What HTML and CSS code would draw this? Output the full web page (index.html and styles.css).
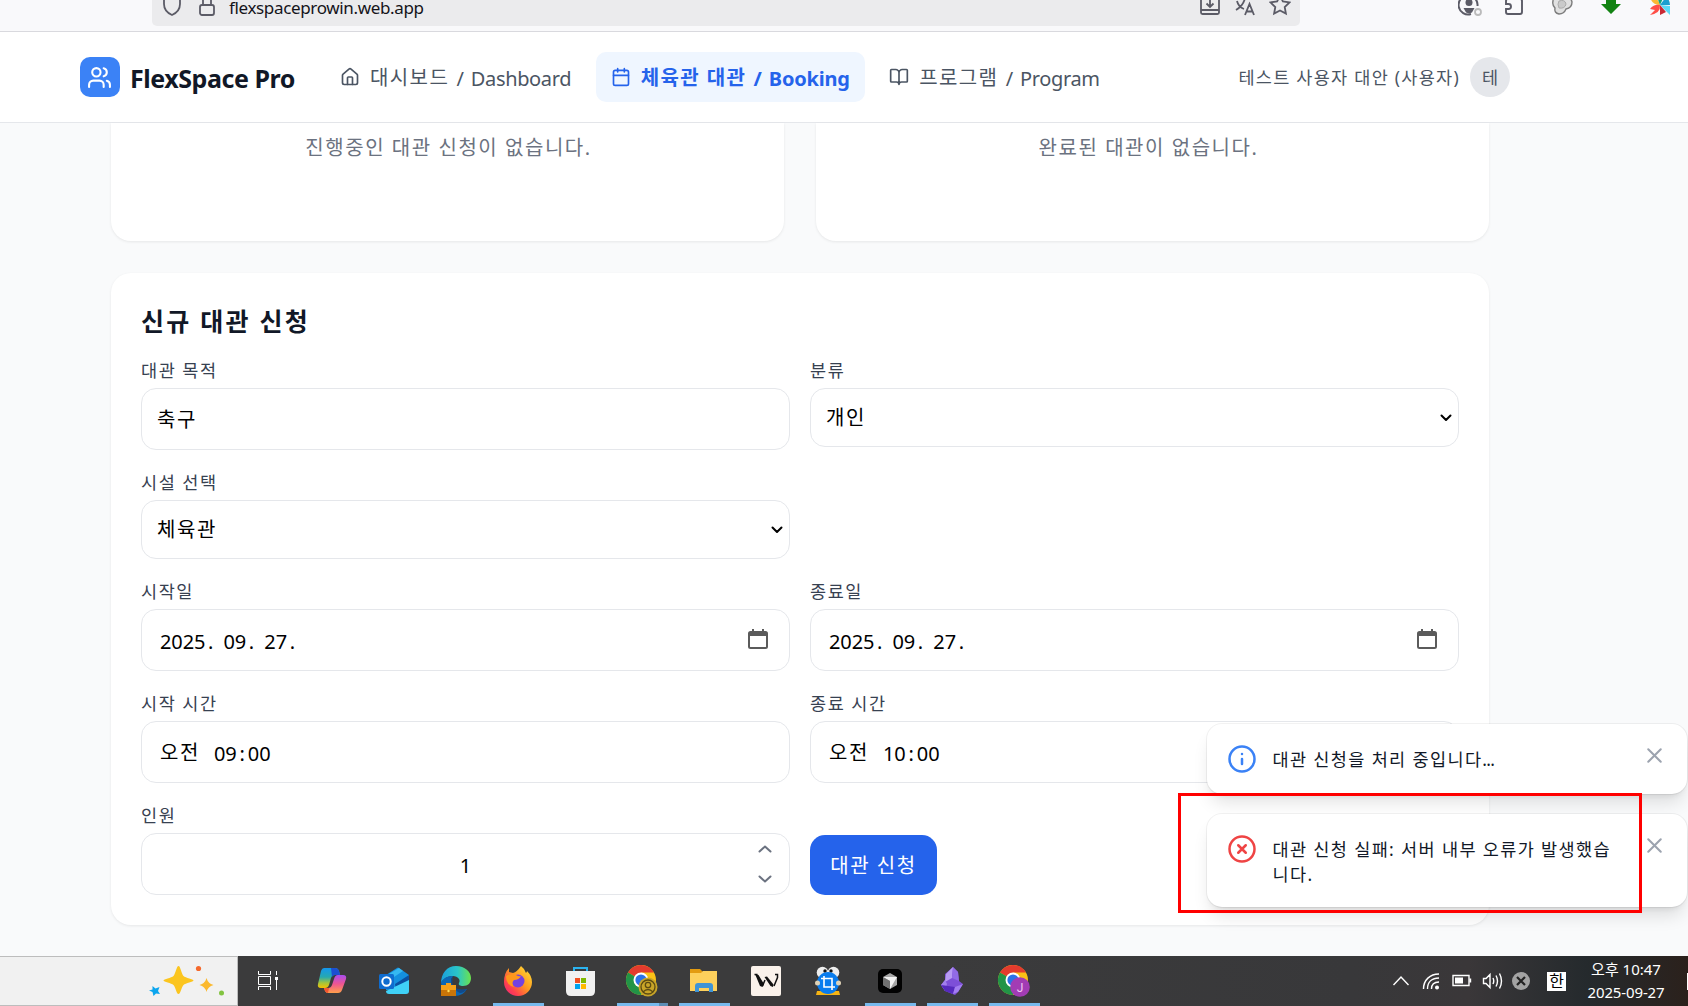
FILE: index.html
```html
<!DOCTYPE html>
<html lang="ko">
<head>
<meta charset="utf-8">
<title>FlexSpace Pro</title>
<link rel="stylesheet" href="styles.css">
</head>
<body>
<div class="browser-bar">
  <div class="url-bar">
    <svg class="shield" width="20" height="22" viewBox="0 0 20 22"><path d="M10 1 18 4v6c0 5-3.500 9-8 11C5.500 19 2 15 2 10V4z"/></svg>
    <svg class="lock" width="18" height="22" viewBox="0 0 18 22"><rect x="2" y="11" width="14" height="10" rx="2"/><path d="M5 11V6a4 4 0 0 1 8 0v5"/></svg>
    <span class="url">flexspaceprowin.web.app</span>
    <svg class="save" width="22" height="22" viewBox="0 0 22 22"><path d="M6 2H3.500Q2 2 2 3.500V18.500Q2 20 3.500 20h15Q20 20 20 18.500V3.500Q20 2 18.500 2H16M2 16h18M11 1v12M7.500 9.500 11 13l3.500-3.500"/></svg>
    <svg class="translate" width="22" height="22" viewBox="0 0 22 22"><path d="M1 4h12M7 1v3M2 16C7 13 10 9 11 4M3 7c1 4 4 7 7 8M11 21l4.500-11L20 21M12.500 17.500h6"/></svg>
    <svg class="star" width="22" height="22" viewBox="0 0 22 22"><path d="m11 1.500 2.900 6 6.600.9-4.800 4.600 1.200 6.600L11 16.400l-5.900 3.200 1.200-6.600L1.500 8.400l6.600-.9z"/></svg>
  </div>
  <div class="extensions">
    <svg width="24" height="22" viewBox="0 0 24 22"><path d="M13 20A9.500 9.500 0 1 1 19.500 12" fill="none" stroke="#5b5b66" stroke-width="2"/><circle cx="11" cy="8.500" r="3.500" fill="#5b5b66"/><path d="M5.500 14h11l-2.500 4.500q-3 1.500-6 0z" fill="#5b5b66"/><circle cx="20" cy="18" r="3" fill="none" stroke="#bbb" stroke-width="1.800"/></svg>
    <svg class="puzzle" width="22" height="22" viewBox="0 0 22 22"><path d="M3 10V7q0-2 2-2h4V3.500a2 2 0 0 1 4 0V5h4q2 0 2 2v11q0 2-2 2H5q-2 0-2-2v-3h2.500a2.500 2.500 0 0 0 0-5z" fill="none" stroke="#5b5b66" stroke-width="1.900"/></svg>
    <svg class="blobs" width="22" height="22" viewBox="0 0 22 22" fill="#d0d0d0" fill-opacity=".6"><path d="M8 1q4-1 6 2 6 0 7 5 0 6-6 7-2 5-7 5-5-1-4-6-3-3-2-7 0-5 6-6z" stroke="#7c7c7c" stroke-width="1.400"/><path d="M8 7q6-2 7 3-1 5-7 4-2-4 0-7z" fill="#bbb" stroke="#aaa"/></svg>
    <svg class="down" width="22" height="22" viewBox="0 0 22 22"><path d="M6 0h10v10h5L11 20 1 10h5z" fill="#138313"/></svg>
    <svg class="pinwheel" width="22" height="22" viewBox="0 0 22 22"><path d="M1 3q9 1 10 8-8 0-10-8z" fill="#fbb934"/><path d="M7 0h9l-5 11z" fill="#12a37d"/><path d="m11 11 6-8q4 3 4 8z" fill="#1b9fd0"/><path d="m11 11 10 1v9z" fill="#5cd8f5"/><path d="m11 11 6 7-6 3z" fill="#c92a35"/><path d="M11 11q1 8-10 10l5-5-5-1q4-5 10-4z" fill="#ff4f48"/></svg>
  </div>
</div>

<header class="site-header">
  <div class="brand">
    <span class="brand-mark"><svg class="line" width="25" height="25" viewBox="0 0 24 24"><path d="M16 21v-2a4 4 0 0 0-4-4H6a4 4 0 0 0-4 4v2"/><circle cx="9" cy="7" r="4"/><path d="M22 21v-2a4 4 0 0 0-3-3.870M16 3.130a4 4 0 0 1 0 7.750"/></svg></span>
    <span class="brand-name">FlexSpace Pro</span>
  </div>
  <nav class="nav">
    <a class="nav-item"><svg class="line" width="20" height="20" viewBox="0 0 24 24"><path d="M15 21v-8a1 1 0 0 0-1-1h-4a1 1 0 0 0-1 1v8"/><path d="M3 10a2 2 0 0 1 .709-1.528l7-5.999a2 2 0 0 1 2.582 0l7 5.999A2 2 0 0 1 21 10v9a2 2 0 0 1-2 2H5a2 2 0 0 1-2-2z"/></svg><span class="nav-text">대시보드<span class="latin"> / Dashboard</span></span></a>
    <a class="nav-item active"><svg class="line" width="20" height="20" viewBox="0 0 24 24"><path d="M8 2v4M16 2v4M3 10h18"/><rect x="3" y="4" width="18" height="18" rx="2"/></svg><span class="nav-text">체육관 대관<span class="latin"> / Booking</span></span></a>
    <a class="nav-item"><svg class="line" width="20" height="20" viewBox="0 0 24 24"><path d="M12 7v14M3 18a1 1 0 0 1-1-1V4a1 1 0 0 1 1-1h5a4 4 0 0 1 4 4 4 4 0 0 1 4-4h5a1 1 0 0 1 1 1v13a1 1 0 0 1-1 1h-6a3 3 0 0 0-3 3 3 3 0 0 0-3-3z"/></svg><span class="nav-text">프로그램<span class="latin"> / Program</span></span></a>
  </nav>
  <div class="user"><span class="user-name">테스트 사용자 대안 (사용자)</span><span class="avatar">테</span></div>
</header>

<main class="main">
  <div class="status-row">
    <section class="status-card">진행중인 대관 신청이 없습니다.</section>
    <section class="status-card done">완료된 대관이 없습니다.</section>
  </div>
  <section class="form-card">
    <h2>신규 대관 신청</h2>
    <form class="form-grid">
      <div class="field"><label>대관 목적</label><div class="control">축구</div></div>
      <div class="field"><label>분류</label><div class="control select">개인<svg class="line caret" width="12" height="8" viewBox="0 0 12 8"><path d="m1.500 1.500 4.500 4.500 4.500-4.500"/></svg></div></div>
      <div class="field first-col"><label>시설 선택</label><div class="control select">체육관<svg class="line caret" width="12" height="8" viewBox="0 0 12 8"><path d="m1.500 1.500 4.500 4.500 4.500-4.500"/></svg></div></div>
      <div class="field"><label>시작일</label><div class="control picker"><span class="digits">2025<i>.</i> 09<i>.</i> 27<i>.</i></span><svg class="cal" width="22" height="22" viewBox="0 0 22 22"><path d="M5 1h2v2h8V1h2v2h1.500A2.500 2.500 0 0 1 21 5.500v13a2.500 2.500 0 0 1-2.500 2.500h-15A2.500 2.500 0 0 1 1 18.500v-13A2.500 2.500 0 0 1 3.500 3H5zM3 8v10.500q0 .5.500.500h15q.5 0 .500-.500V8z" fill-rule="evenodd"/></svg></div></div>
      <div class="field"><label>종료일</label><div class="control picker"><span class="digits">2025<i>.</i> 09<i>.</i> 27<i>.</i></span><svg class="cal" width="22" height="22" viewBox="0 0 22 22"><path d="M5 1h2v2h8V1h2v2h1.500A2.500 2.500 0 0 1 21 5.500v13a2.500 2.500 0 0 1-2.500 2.500h-15A2.500 2.500 0 0 1 1 18.500v-13A2.500 2.500 0 0 1 3.500 3H5zM3 8v10.500q0 .5.500.500h15q.5 0 .500-.500V8z" fill-rule="evenodd"/></svg></div></div>
      <div class="field"><label>시작 시간</label><div class="control picker"><span>오전</span><span class="digits">09<b>:</b>00</span></div></div>
      <div class="field"><label>종료 시간</label><div class="control picker"><span>오전</span><span class="digits">10<b>:</b>00</span></div></div>
      <div class="field"><label>인원</label><div class="control number"><span class="digits">1</span><span class="stepper"><svg class="line" width="14" height="8" viewBox="0 0 14 8"><path d="m1.500 6.500 5.500-5 5.500 5"/></svg><svg class="line" width="14" height="8" viewBox="0 0 14 8"><path d="m1.500 1.500 5.500 5 5.500-5"/></svg></span></div></div>
      <div class="submit"><button type="button">대관 신청</button></div>
    </form>
  </section>
</main>

<footer class="taskbar">
  <div class="search"><svg width="78" height="32" viewBox="0 0 78 32"><path d="M30.500 1c2 0 3 8 5 10s10 3 10 4.500-8 2.500-10 4.500-3 9-5 9-3-7-5-9-10-3-10-4.500 8-2.500 10-4.500 3-10 5-10z" fill="#fbc51f"/><path d="M58.500 13q1.500 5.500 7 7-5.500 1.500-7 7-1.500-5.500-7-7 5.500-1.500 7-7z" fill="#fbb92e"/><path d="m4.500 21 3 2.500 4-1.500-1.500 4 2 3-4-.500-2.500 2.500-1-4-3.500-1.500 3.500-1z" fill="#0ba5ee"/><circle cx="50.500" cy="3.500" r="2.600" fill="#f5692c"/><circle cx="73.500" cy="28" r="2.500" fill="#82c341"/></svg></div>
  <div class="apps">
    <span class="app narrow"><svg width="22" height="22" viewBox="0 0 22 22" fill="none" stroke="#fff"><path d="M1.500 1v3.500h12V1M1.500 20v-3.500h12V20M1.500 6.500h12v8h-12zM19.500 1v4M19.500 10v10"/><path d="M18 7h3v3h-3z" fill="#fff" stroke="none"/></svg></span>
    <span class="app"><svg width="32" height="32" viewBox="0 0 32 32"><defs><linearGradient id="cp1" x2="0" y2="1"><stop stop-color="#1496ee"/><stop offset=".45" stop-color="#26a9b0"/><stop offset=".75" stop-color="#a6c53a"/><stop offset="1" stop-color="#f5c000"/></linearGradient><linearGradient id="cp2" x2="0" y2="1"><stop stop-color="#a94cf0"/><stop offset=".5" stop-color="#ee5591"/><stop offset="1" stop-color="#ffa04a"/></linearGradient></defs><path d="M8 3h11q3 0 4 3l1 4h-5q-3 0-4 3l-2 7q-1 3-4 3H5q-4 0-3-4L5 6q1-3 3-3z" fill="url(#cp1)"/><path d="M15 3h4q3 0 4 3l1 4h-5q-2 0-3 2z" fill="#1c4fd1"/><path d="M22 10h5q4 0 3 4l-4 11q-1 3-4 3H12q-3 0-4-5h4q3 0 4-3l2-6q1-4 4-4z" fill="url(#cp2)"/><path d="M8 23h5l-1 5q-3 0-4-5z" fill="#f3562f"/></svg></span>
    <span class="app"><svg width="32" height="32" viewBox="0 0 32 32"><path d="M8 10 19 3q1-1 2 0l10 7v5L15 25H8z" fill="#1490df"/><path d="m17 19 14-9v6l-13 8z" fill="#0a4fa0"/><path d="m11 9 10-6 4 3-12 8z" fill="#35b8f1"/><path d="M8 26l23-11v11q0 3-3 3H11q-3 0-3-3z" fill="#3fd1f7"/><rect x="1" y="9" width="15" height="15" rx="1.500" fill="#0f6ccf"/><circle cx="8.500" cy="16.500" r="4.200" fill="none" stroke="#fff" stroke-width="2"/></svg></span>
    <span class="app"><svg width="32" height="32" viewBox="0 0 32 32"><defs><linearGradient id="edge"><stop stop-color="#1aa0dd"/><stop offset=".55" stop-color="#2ac5c8"/><stop offset="1" stop-color="#6be24d"/></linearGradient></defs><path d="M1 19C1 8 7 1 16 1s15 6 15 12c0 5-3 8-8 8-3 0-5-1-4-3 2-3-1-7-6-7-7 0-11 4-12 8z" fill="url(#edge)"/><path d="M1 17q5-7 12-6-4 5 0 10 5 6 14 3-4 7-12 7Q2 30 1 17z" fill="#0c67b5"/><path d="M13 11q-4 5 0 10 5 5 14 3-3 4-7 4-10-5-7-17z" fill="#114a8b"/><rect x="1" y="20" width="15" height="11" fill="#c97509"/><path d="M1 20h15v5H1zM6 20v-2h5v2" fill="#f6a019"/><circle cx="8.500" cy="26" r="1.200" fill="#ffe05b"/></svg></span>
    <span class="app open"><svg width="32" height="32" viewBox="0 0 32 32"><defs><linearGradient id="ff" x1="1" x2="0" y2="1"><stop stop-color="#ffe83b"/><stop offset=".45" stop-color="#ff9a1f"/><stop offset=".75" stop-color="#ff3f50"/><stop offset="1" stop-color="#e52183"/></linearGradient></defs><path d="M19 1q4 3 5 7 1-1 1-2 5 5 5 11a14 14 0 0 1-28 0Q2 8 7 3v4l4 1q4-1 8-7z" fill="url(#ff)"/><circle cx="16" cy="16" r="6.500" fill="#7542e0"/><path d="M4 11q6-3 10-1 3 2 5 1-2 4-7 4-3 3 0 7-8-2-8-11z" fill="#ff981c"/></svg></span>
    <span class="app"><svg width="32" height="32" viewBox="0 0 32 32"><path d="M10 8V3h13v5" fill="none" stroke="#2bb3ef" stroke-width="2"/><path d="M2 6h29v20q0 5-5 5H7q-5 0-5-5z" fill="#f1f1f1"/><path d="M11 13h5v5h-5z" fill="#f25022"/><path d="M17 13h5v5h-5z" fill="#7fba00"/><path d="M11 19h5v5h-5z" fill="#00a4ef"/><path d="M17 19h5v5h-5z" fill="#ffb900"/></svg></span>
    <span class="app open stacked"><svg width="34" height="34" viewBox="0 0 34 34"><circle cx="16" cy="16" r="15" fill="#fbc116"/><path d="M16 16 3 8.500A15 15 0 0 1 29 8.500H16z" fill="#e33b2e"/><path d="M3 8.500A15 15 0 0 0 16 31l6.500-11.500L16 16z" fill="#229447"/><circle cx="16" cy="16" r="7.500" fill="#fff"/><circle cx="16" cy="16" r="5.600" fill="#2c72e8"/><circle cx="23" cy="23" r="9.500" fill="#c9a528"/><circle cx="23" cy="23" r="7" fill="none" stroke="#5d4b13" stroke-width="1.300"/><circle cx="23" cy="21" r="2.700" fill="none" stroke="#5d4b13" stroke-width="1.300"/><path d="M18 28q5-5 10 0" fill="none" stroke="#5d4b13" stroke-width="1.300"/></svg></span>
    <span class="app open"><svg width="32" height="32" viewBox="0 0 32 32"><path d="M2 4h10l3 3v6H2z" fill="#e39b10"/><path d="M2 8h11l2-2h14v20H2z" fill="#fdd05c"/><path d="M7 27v-6q0-3 3-3h12q3 0 3 3v6h-4v-4H11v4z" fill="#3f94d6"/></svg></span>
    <span class="app"><svg width="32" height="32" viewBox="0 0 32 32"><rect x="1" y="1" width="30" height="30" rx="2" fill="#faf2eb"/><path d="M4.500 9.500h3M25 9.500h2.500v3L24 21M12.500 21l2.500-6" fill="none" stroke="#111" stroke-width="1.500"/><path d="m5 9 3.500 1 5.500 9-1.500 3-2.500-1zM14.500 12l2.500-.500 6.500 8-.500 2.500-2.500-1z" fill="#111"/></svg></span>
    <span class="app"><svg width="32" height="32" viewBox="0 0 32 32"><path d="M5 26h22l1 4H4z" fill="#f6b414"/><circle cx="10.500" cy="7.500" r="5.800" fill="#eee"/><circle cx="21.500" cy="7.500" r="5.800" fill="#eee"/><circle cx="13" cy="6" r="1.700" fill="#111"/><circle cx="19" cy="6" r="1.700" fill="#111"/><circle cx="16" cy="18" r="11" fill="#087cee"/><circle cx="5.500" cy="18" r="2.500" fill="#ded1b6"/><circle cx="26.500" cy="18" r="2.500" fill="#ded1b6"/><path d="M12 11v11h11M9 13.500h11V25" fill="none" stroke="#fff" stroke-width="1.600"/></svg></span>
    <span class="app open"><svg width="32" height="32" viewBox="0 0 32 32"><rect x="4" y="4" width="24" height="24" rx="5" fill="#020202"/><path d="m16 8 7 4v8l-7 4-7-4v-8z" fill="#a5a5a5"/><path d="M9 12h14l-7 12v-8z" fill="#f1f1f1"/><path d="m9 12 7 4v8l-7-4z" fill="#707070"/></svg></span>
    <span class="app open"><svg width="32" height="32" viewBox="0 0 32 32"><path d="m17 2 5 5 1 9 4 3-5 8-3 3-10-4-4-6 4-5V9z" fill="#7d4fd8"/><path d="m17 2-7 7-1 8 7-4z" fill="#b79bf2"/><path d="m17 2 5 5 1 9-7-3z" fill="#916be5"/><path d="m9 15 2 4-2 7-4-6z" fill="#a17fed"/><path d="m5 20 14 2-2 7-8-3z" fill="#562abd"/><path d="m19 22 8-3-5 8-5 2z" fill="#a27df0"/></svg></span>
    <span class="app open"><svg width="34" height="34" viewBox="0 0 34 34"><circle cx="16" cy="16" r="15" fill="#fbc116"/><path d="M16 16 3 8.500A15 15 0 0 1 29 8.500H16z" fill="#e33b2e"/><path d="M3 8.500A15 15 0 0 0 16 31l6.500-11.500L16 16z" fill="#229447"/><circle cx="16" cy="16" r="7.500" fill="#fff"/><circle cx="16" cy="16" r="5.600" fill="#2c72e8"/><circle cx="23" cy="23" r="9.800" fill="#a23cb4"/><text x="23" y="27.500" text-anchor="middle" font-size="12" font-family="Roboto, sans-serif" fill="#f1c9f5">J</text></svg></span>
  </div>
  <div class="tray">
    <svg width="18" height="12" viewBox="0 0 18 12"><path d="m1.500 10 7.500-8 7.500 8"/></svg>
    <svg width="18" height="18" viewBox="0 0 18 18"><path d="M1.500 17C1.500 8 8 2 17 2M5.500 17C5.500 10 10 6 17 6M9.500 17q0-7 7.500-7"/><circle cx="15" cy="15.500" r="1.300" fill="#fff"/></svg>
    <svg class="battery" width="20" height="14" viewBox="0 0 20 14"><path d="M1 1.500h16v10H1zM18.500 4.500v4"/><path d="M3 3.500h8v6H3z" fill="#fff" stroke="none"/></svg>
    <svg class="speaker" width="22" height="20" viewBox="0 0 22 20"><path d="M1.500 7.500H4l4-4v13l-4-4H1.500zM11 7q1.500 3 0 6M14 4.500q3 5.500 0 11M17.500 2.500q4 7.500 0 15"/></svg>
    <svg width="20" height="20" viewBox="0 0 20 20"><circle cx="10" cy="10" r="9" fill="#a3a3a3" stroke="none"/><path d="m6 6 8 8M14 6l-8 8" stroke="#222" stroke-width="2.200"/></svg>
    <span class="ime">한</span>
    <div class="clock"><span>오후 10:47</span><span class="clock-date">2025-09-27</span></div>
    <span class="notch"></span>
  </div>
</footer>

<div class="toasts">
  <div class="toast info"><svg class="line" width="30" height="30" viewBox="0 0 24 24"><circle cx="12" cy="12" r="10"/><path d="M12 16v-4M12 8h.010"/></svg><p>대관 신청을 처리 중입니다<span class="dots">...</span></p><svg class="line close" width="25" height="25" viewBox="0 0 24 24"><path d="M18 6 6 18M6 6l12 12"/></svg></div>
  <div class="toast error"><svg class="line" width="30" height="30" viewBox="0 0 24 24"><circle cx="12" cy="12" r="10"/><path d="m15 9-6 6M9 9l6 6"/></svg><p>대관 신청 실패: 서버 내부 오류가 발생했습니다.</p><svg class="line close" width="25" height="25" viewBox="0 0 24 24"><path d="M18 6 6 18M6 6l12 12"/></svg></div>
</div>
<div class="highlight"></div>
</body>
</html>
```
FILE: styles.css
```css
* { box-sizing: border-box; }

body {
  margin: 0;
  width: 1688px;
  height: 1006px;
  overflow: hidden;
  position: relative;
  display: flex;
  flex-direction: column;
  background: #f9fafb;
  color: #111827;
  font-family: "Noto Sans", "Noto Sans CJK KR", sans-serif;
  font-size: 20px;
  line-height: 25px;
}

svg { flex: none; display: block; }

.line {
  fill: none;
  stroke: currentColor;
  stroke-width: 2;
  stroke-linecap: round;
  stroke-linejoin: round;
}

/* Browser chrome */
.browser-bar {
  flex: none;
  display: flex;
  align-items: flex-end;
  height: 32px;
  overflow: hidden;
  padding: 0 17px 5px 152px;
  background: #f9f9fb;
  border-bottom: 1px solid #d9d9de;
}

.url-bar {
  flex: none;
  display: flex;
  align-items: center;
  width: 1148px;
  height: 42px;
  padding: 0 9px 0 10px;
  border-radius: 5px;
  background: #ebebed;
  color: #15141a;
}

.url-bar svg { fill: none; stroke: #5b5b66; stroke-width: 1.8; }
.lock { margin: 0 13px 0 16px; }
.url { margin-top: 6px; font-size: 17px; line-height: 20px; letter-spacing: -.35px; white-space: nowrap; }
.url-bar .save { margin-left: auto; }
.url-bar .translate { margin: 0 13px; }

.extensions { display: flex; padding: 0 0 10px 158px; }
.puzzle { margin-left: 21px; }
.blobs { margin-left: 26px; }
.down { margin-left: 27px; }
.pinwheel { margin-left: 27px; }

/* Site header */
.site-header {
  flex: none;
  display: flex;
  align-items: center;
  height: 91px;
  padding: 0 178px 0 80px;
  background: #fff;
  border-bottom: 1px solid #e5e7eb;
  white-space: nowrap;
}

.brand { display: flex; align-items: center; gap: 10px; margin-right: 30px; }

.brand-mark {
  display: grid;
  place-items: center;
  width: 40px;
  height: 40px;
  padding-right: 1px;
  border-radius: 10px;
  background: #3b82f6;
  color: #fff;
}

.brand-name { font-size: 25px; font-weight: 700; padding-top: 3px; letter-spacing: -.444px; }

.nav { display: flex; gap: 9.5px; }

.nav-item {
  display: flex;
  align-items: center;
  gap: 10px;
  height: 50px;
  padding: 2px 15px 0;
  border-radius: 10px;
  color: #4b5563;
}

.nav-item svg { margin-top: -2px; }
.nav-text { letter-spacing: .07em; }
.latin { letter-spacing: -.35px; word-spacing: 2.4px; vertical-align: -1px; }
.nav-item.active { background: #eff6ff; color: #2563eb; font-weight: 700; }
.active .latin { letter-spacing: -.2px; word-spacing: 2.2px; }

.user {
  display: flex;
  align-items: center;
  gap: 10px;
  margin-left: auto;
  color: #4b5563;
  font-size: 17.5px;
}

.user-name { letter-spacing: 1.27px; }

.avatar {
  display: grid;
  place-items: center;
  width: 40px;
  height: 40px;
  border-radius: 50%;
  background: #e5e7eb;
}

/* Content */
.main {
  flex: 1;
  padding: 0 199px 0 111px;
  letter-spacing: .077em;
}

.status-row { display: grid; grid-template-columns: 1fr 1fr; gap: 32px; }

.status-card {
  height: 118px;
  padding: 12px 0 0 2px;
  border-radius: 0 0 20px 20px;
  background: #fff;
  box-shadow: 0 1px 3px rgba(0, 0, 0, .08);
  color: #6b7280;
  text-align: center;
}

.status-card.done { padding-right: 10px; }

.form-card {
  margin-top: 32px;
  height: 652px;
  padding: 31px 30px 30px;
  border-radius: 20px;
  background: #fff;
  box-shadow: 0 1px 3px rgba(0, 0, 0, .08);
}

.form-card h2 {
  margin: 0 0 19px;
  font-size: 25px;
  line-height: 35px;
  font-weight: 700;
  letter-spacing: .09em;
}

.form-grid { display: grid; grid-template-columns: 1fr 1fr; gap: 20px; align-items: start; }
.first-col { grid-column: 1 / 3; width: 649px; }

.field label {
  display: block;
  height: 25px;
  margin-bottom: 5px;
  color: #374151;
  font-size: 17.5px;
}

.control {
  display: flex;
  align-items: center;
  height: 62px;
  padding: 0 15px;
  border: 1px solid #e5e7eb;
  border-radius: 15px;
  color: #000;
}

.select { height: 59px; justify-content: space-between; padding-right: 6px; }
.picker { padding: 0 20px 0 18px; gap: 14px; }
.digits { letter-spacing: -.1px; padding-top: 3px; white-space: pre; }
.digits i { font-style: normal; margin: 0 5.2px 0 2.6px; }
.digits b { font-weight: 400; margin: 0 3px; }
.cal { margin: 0 0 2px auto; fill: #5b5b5b; }
.number { position: relative; justify-content: center; }

.stepper {
  position: absolute;
  right: 17px;
  top: 11px;
  display: grid;
  gap: 22px;
  color: #6b7280;
}

.submit { align-self: end; }

.submit button {
  display: block;
  width: 127px;
  height: 60px;
  padding: 0;
  border: 0;
  border-radius: 15px;
  background: #2563eb;
  color: #fff;
  font: inherit;
  letter-spacing: inherit;
}

/* Notifications */
.toasts {
  position: absolute;
  left: 1207px;
  top: 724px;
  width: 480px;
  display: grid;
  gap: 20px;
}

.toast {
  display: flex;
  align-items: flex-start;
  min-height: 70px;
  padding: 20px;
  border-radius: 15px;
  background: #fff;
  box-shadow: 0 0 0 1px rgba(0, 0, 0, .05), 0 12px 18px -4px rgba(0, 0, 0, .12), 0 5px 7px -5px rgba(0, 0, 0, .12);
}

.toast p {
  flex: 1;
  margin: 3px 0 0 15.5px;
  padding-right: 19px;
  font-size: 17.5px;
  letter-spacing: .078em;
  word-break: break-all;
}

.dots { letter-spacing: -.8px; }
.toast .close { margin-top: -1px; color: #9ca3af; }
.info > svg:first-child { color: #3b82f6; }
.error > svg:first-child { color: #ef4444; }

.highlight {
  position: absolute;
  left: 1178px;
  top: 793px;
  width: 464px;
  height: 120px;
  border: 3px solid #f00;
}

/* Taskbar */
.taskbar {
  flex: none;
  display: flex;
  height: 50px;
  background: linear-gradient(90deg, #3b3b3c 0 55%, #38383a 80%, #3a3739 87%, #252a2d 94%, #2b211c);
  color: #fff;
}

.search {
  width: 238px;
  padding: 8px 0 0 148px;
  background: #f1f1f1;
  border: 1px solid #bdbdbd;
  border-left: 0;
}

.apps { display: flex; }

.app {
  display: grid;
  place-items: center;
  width: 51px;
  height: 50px;
  margin: 0 5.5px;
}

.app.narrow { width: 52px; padding-right: 4px; }
.open { border-bottom: 3px solid #76b9ed; padding-top: 3px; }
.stacked { border-image: linear-gradient(90deg, #76b9ed 78%, #5c8db5 78%) 3; }

.tray {
  display: flex;
  align-items: center;
  margin-left: auto;
  gap: 12px;
}

.tray svg { fill: none; stroke: #fff; stroke-width: 1.4; }
.tray .battery { margin-right: -2px; }
.tray .speaker { margin-right: -5px; }

.ime {
  display: grid;
  place-items: center;
  width: 19px;
  height: 19px;
  margin-left: 4px;
  background: #fff;
  color: #000;
  font-size: 16px;
  line-height: 19px;
}

.clock {
  width: 90px;
  margin: 0 4px 0 3px;
  display: grid;
  justify-items: center;
  font-size: 15px;
  line-height: 23px;
  white-space: nowrap;
}

.clock-date { letter-spacing: -.13px; }

.notch { width: 1px; height: 17px; background: #fff; }
```
